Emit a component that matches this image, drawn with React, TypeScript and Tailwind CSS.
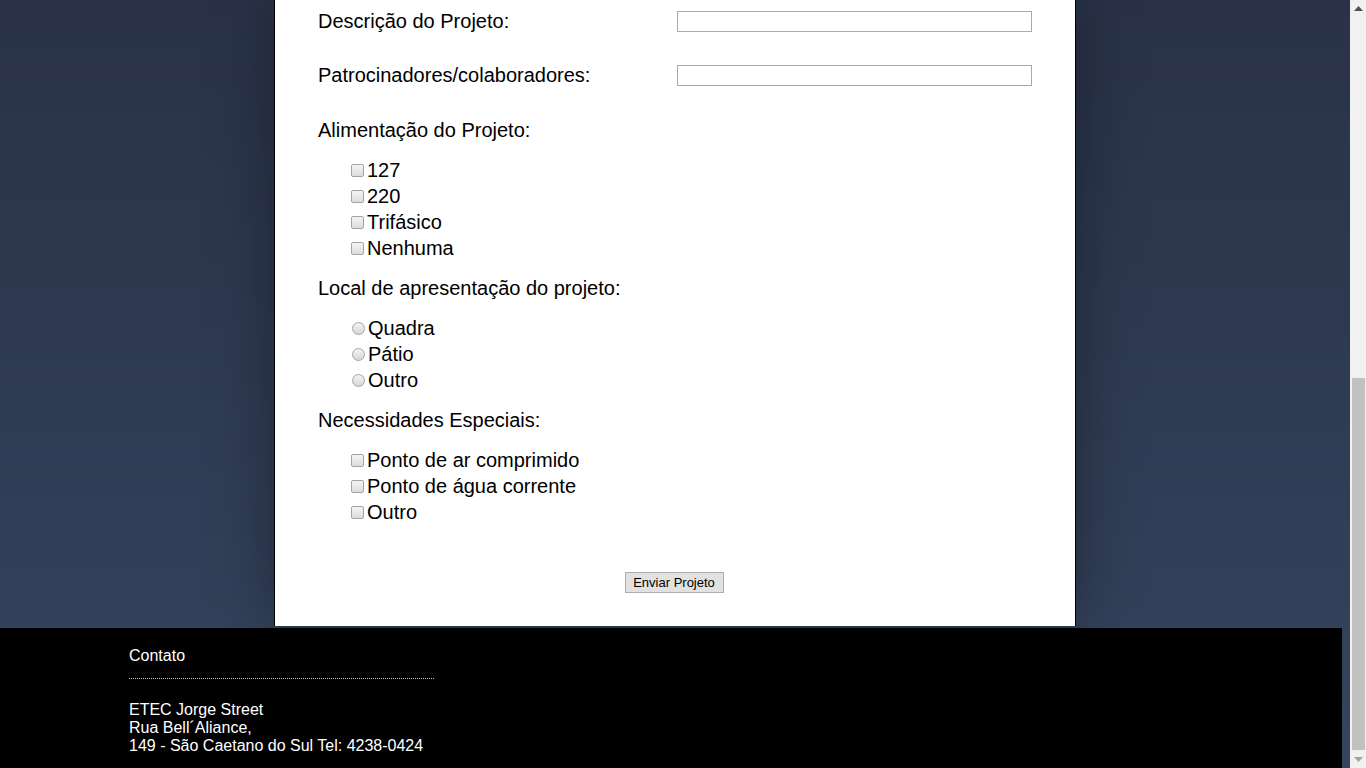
import React from "react";

const font = { fontFamily: '"Liberation Sans", Arial, sans-serif' };

function Check({ label }: { label: string }) {
  return (
    <label className="flex h-[26px] items-center">
      <span className="mr-[3px] h-[13px] w-[13px] rounded-[2px] border border-[#a3a3a3] bg-gradient-to-b from-[#f4f4f4] to-[#dcdcdc]" />
      <span className="text-[20px] text-black">{label}</span>
    </label>
  );
}

function Radio({ label }: { label: string }) {
  return (
    <label className="flex h-[26px] items-center">
      <span className="ml-px mr-[3px] h-[13px] w-[13px] rounded-full border border-[#a3a3a3] bg-gradient-to-b from-[#f4f4f4] to-[#d6d6d6]" />
      <span className="text-[20px] text-black">{label}</span>
    </label>
  );
}

function TextRow({ label, className }: { label: string; className?: string }) {
  return (
    <div className={"flex h-[22px] items-center justify-between " + (className ?? "")}>
      <span className="text-[20px] text-black">{label}</span>
      <input
        type="text"
        className="h-[21px] w-[355px] border border-[#a9a9a9] bg-white outline-none"
      />
    </div>
  );
}

function Scrollbar() {
  return (
    <div className="flex h-full w-[16px] flex-col items-center bg-[#f1f1f1]">
      <div className="flex h-[17px] w-full items-center justify-center">
        <svg width="9" height="5" viewBox="0 0 9 5">
          <path d="M4.5 0 L9 5 L0 5 Z" fill="#505050" />
        </svg>
      </div>
      <div className="h-[361px]" />
      <div className="h-[372px] w-[13px] bg-[#c1c1c1]" />
      <div className="flex h-[18px] w-full items-center justify-center">
        <svg width="9" height="5" viewBox="0 0 9 5">
          <path d="M0 0 L9 0 L4.5 5 Z" fill="#a3a3a3" />
        </svg>
      </div>
    </div>
  );
}

export default function App() {
  return (
    <div className="flex h-[768px] w-[1366px] overflow-hidden" style={font}>
      <div className="flex h-full w-[1350px] flex-col bg-gradient-to-b from-[#293247] to-[#35445f]">
        <div className="mx-auto mb-[2px] w-[802px] flex-1 border-x border-black bg-white pl-[43px] pr-[43px] pt-[10px] shadow-[0_0_60px_rgba(0,0,0,0.35)]">
          <TextRow label="Descrição do Projeto:" />
          <TextRow label="Patrocinadores/colaboradores:" className="mt-[32px]" />

          <div className="mt-[32px] h-[24px] text-[20px] leading-[24px] text-black">
            Alimentação do Projeto:
          </div>
          <div className="mt-[15px] pl-[33px]">
            <Check label="127" />
            <Check label="220" />
            <Check label="Trifásico" />
            <Check label="Nenhuma" />
          </div>

          <div className="mt-[15px] h-[24px] text-[20px] leading-[24px] text-black">
            Local de apresentação do projeto:
          </div>
          <div className="mt-[15px] pl-[33px]">
            <Radio label="Quadra" />
            <Radio label="Pátio" />
            <Radio label="Outro" />
          </div>

          <div className="mt-[15px] h-[24px] text-[20px] leading-[24px] text-black">
            Necessidades Especiais:
          </div>
          <div className="mt-[15px] pl-[33px]">
            <Check label="Ponto de ar comprimido" />
            <Check label="Ponto de água corrente" />
            <Check label="Outro" />
          </div>

          <div className="mt-[47px] flex justify-center pr-[2px]">
            <button className="h-[21px] w-[99px] border border-[#adadad] bg-[#e1e1e1] text-[13px] text-black">
              Enviar Projeto
            </button>
          </div>
        </div>

        <footer className="h-[140px] w-[1342px] bg-black pl-[129px] pt-[19px] text-[16px] leading-[18px] text-white">
          <div>Contato</div>
          <div className="mt-[13px] w-[305px] border-t border-dotted border-[#cfcfcf]" />
          <div className="mt-[22px]">
            <div>ETEC Jorge Street</div>
            <div>Rua Bell´Aliance,</div>
            <div>149 - São Caetano do Sul Tel: 4238-0424</div>
          </div>
        </footer>
      </div>
      <Scrollbar />
    </div>
  );
}
